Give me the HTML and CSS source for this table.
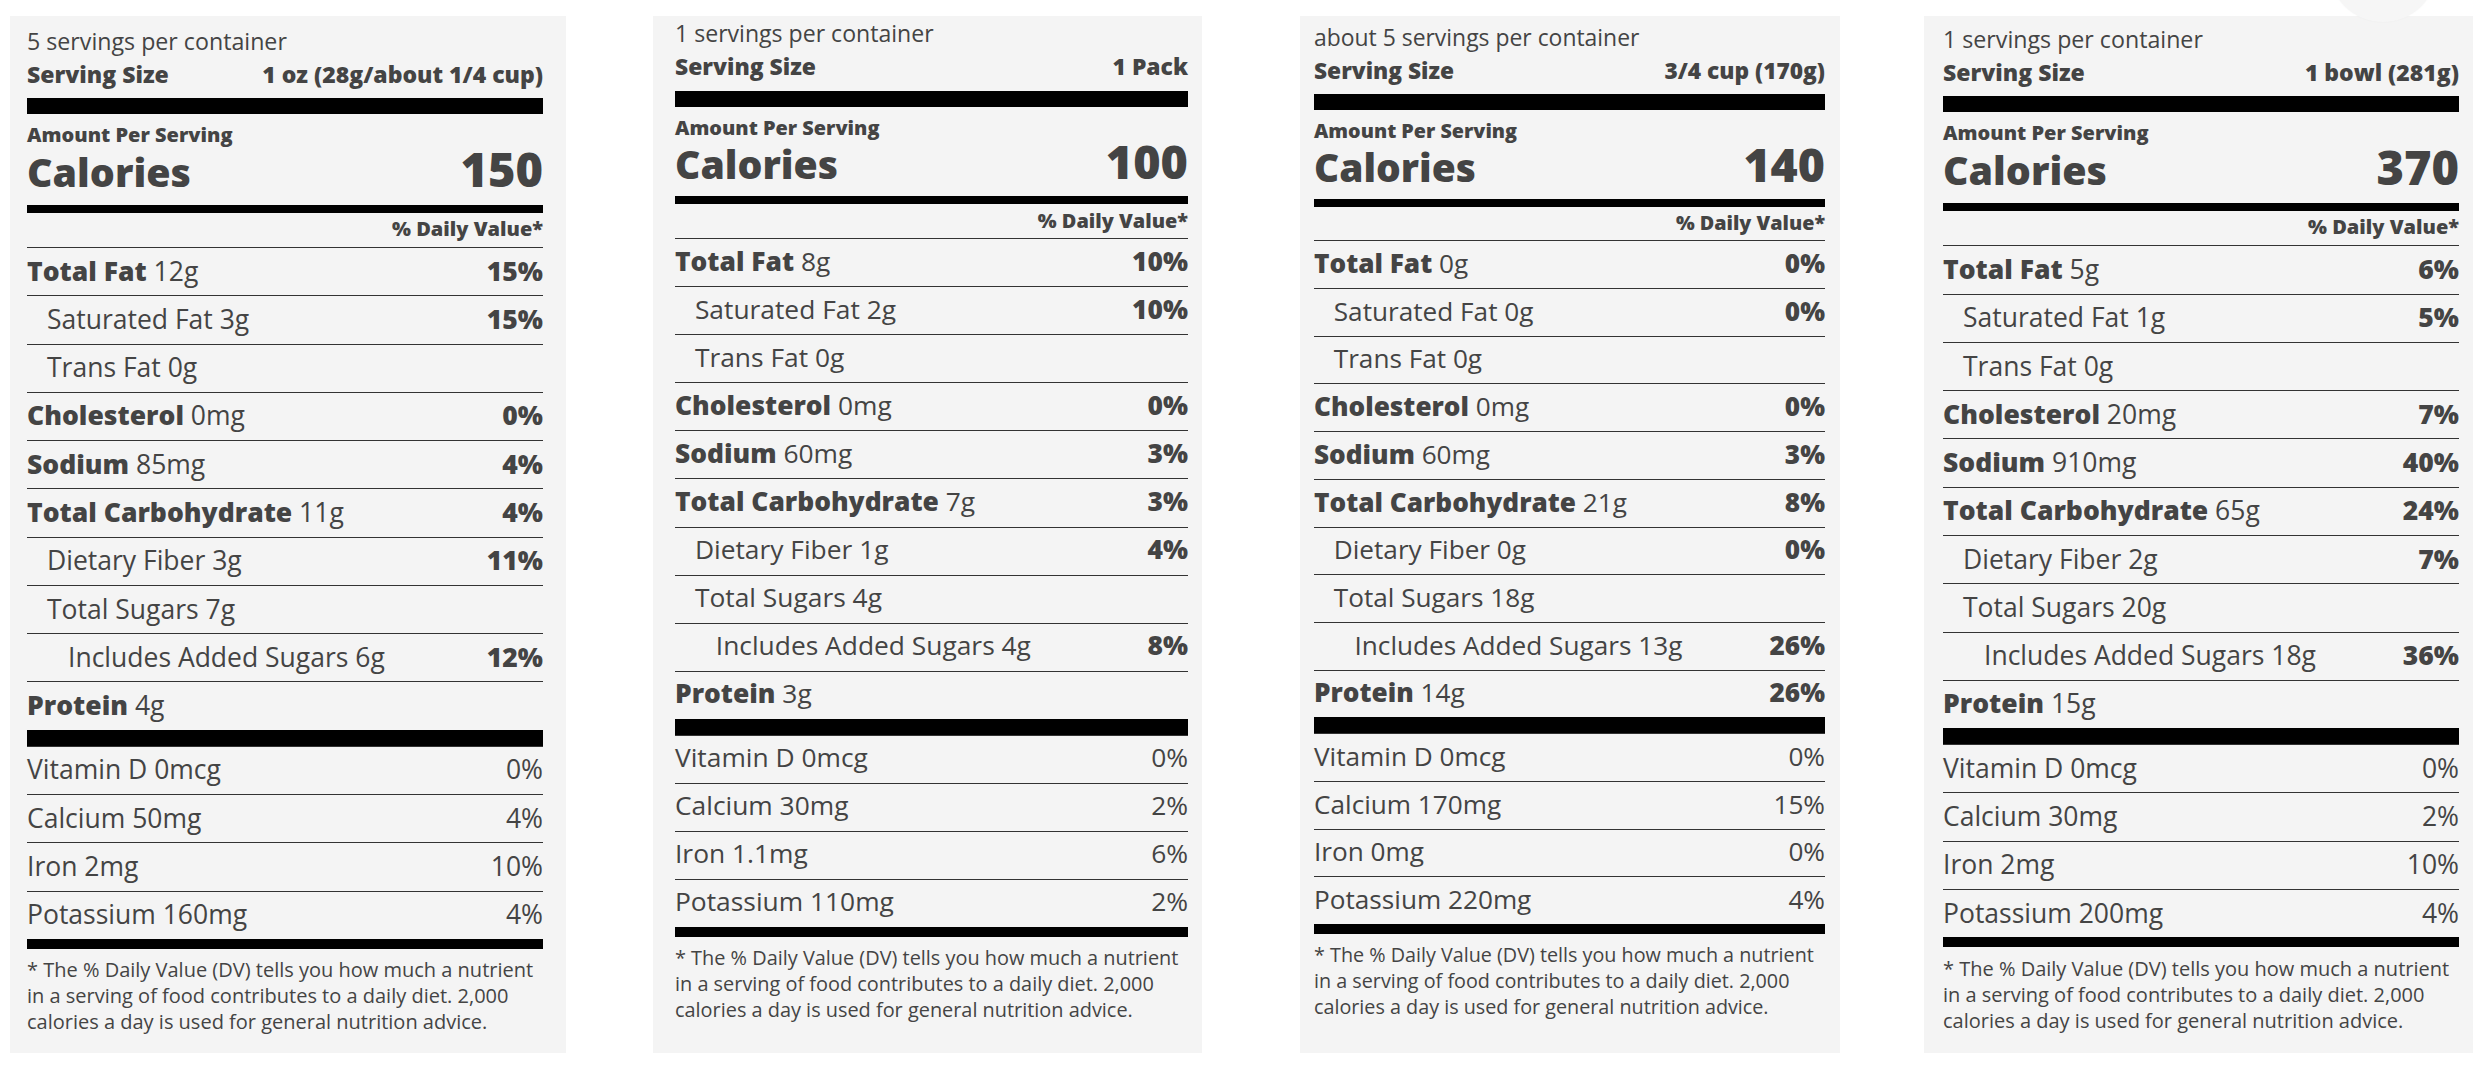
FILE: index.html
```html
<!DOCTYPE html>
<html lang="en">
<head>
<meta charset="utf-8">
<title>Nutrition Facts</title>
<link rel="stylesheet" href="styles.css">
</head>
<body>
<div class="page">
  <span class="nav-dot" aria-hidden="true"></span>
  <main class="labels">

    <section class="label label--1">
      <div class="label__body">
        <p class="servings">5 servings per container</p>
        <div class="serving-size"><span>Serving Size</span><span>1 oz (28g/about 1/4 cup)</span></div>
        <div class="bar bar--lg"></div>
        <p class="amount">Amount Per Serving</p>
        <div class="calories"><span class="calories__label">Calories</span><span class="calories__num">150</span></div>
        <div class="bar bar--md"></div>
        <p class="dv-head">% Daily Value*</p>
        <ul class="rows">
          <li class="row"><span><b>Total Fat</b> 12g</span><b>15%</b></li>
          <li class="row row--sub"><span>Saturated Fat 3g</span><b>15%</b></li>
          <li class="row row--sub"><span>Trans Fat 0g</span></li>
          <li class="row"><span><b>Cholesterol</b> 0mg</span><b>0%</b></li>
          <li class="row"><span><b>Sodium</b> 85mg</span><b>4%</b></li>
          <li class="row"><span><b>Total Carbohydrate</b> 11g</span><b>4%</b></li>
          <li class="row row--sub"><span>Dietary Fiber 3g</span><b>11%</b></li>
          <li class="row row--sub"><span>Total Sugars 7g</span></li>
          <li class="row row--subsub"><span>Includes Added Sugars 6g</span><b>12%</b></li>
          <li class="row"><span><b>Protein</b> 4g</span></li>
        </ul>
        <div class="bar bar--xl"></div>
        <ul class="rows">
          <li class="row"><span>Vitamin D 0mcg</span><span>0%</span></li>
          <li class="row"><span>Calcium 50mg</span><span>4%</span></li>
          <li class="row"><span>Iron 2mg</span><span>10%</span></li>
          <li class="row"><span>Potassium 160mg</span><span>4%</span></li>
        </ul>
        <div class="bar bar--sm"></div>
        <p class="footnote">* The % Daily Value (DV) tells you how much a nutrient in a serving of food contributes to a daily diet. 2,000 calories a day is used for general nutrition advice.</p>
      </div>
    </section>

    <section class="label label--2">
      <div class="label__body">
        <p class="servings">1 servings per container</p>
        <div class="serving-size"><span>Serving Size</span><span>1 Pack</span></div>
        <div class="bar bar--lg"></div>
        <p class="amount">Amount Per Serving</p>
        <div class="calories"><span class="calories__label">Calories</span><span class="calories__num">100</span></div>
        <div class="bar bar--md"></div>
        <p class="dv-head">% Daily Value*</p>
        <ul class="rows">
          <li class="row"><span><b>Total Fat</b> 8g</span><b>10%</b></li>
          <li class="row row--sub"><span>Saturated Fat 2g</span><b>10%</b></li>
          <li class="row row--sub"><span>Trans Fat 0g</span></li>
          <li class="row"><span><b>Cholesterol</b> 0mg</span><b>0%</b></li>
          <li class="row"><span><b>Sodium</b> 60mg</span><b>3%</b></li>
          <li class="row"><span><b>Total Carbohydrate</b> 7g</span><b>3%</b></li>
          <li class="row row--sub"><span>Dietary Fiber 1g</span><b>4%</b></li>
          <li class="row row--sub"><span>Total Sugars 4g</span></li>
          <li class="row row--subsub"><span>Includes Added Sugars 4g</span><b>8%</b></li>
          <li class="row"><span><b>Protein</b> 3g</span></li>
        </ul>
        <div class="bar bar--xl"></div>
        <ul class="rows">
          <li class="row"><span>Vitamin D 0mcg</span><span>0%</span></li>
          <li class="row"><span>Calcium 30mg</span><span>2%</span></li>
          <li class="row"><span>Iron 1.1mg</span><span>6%</span></li>
          <li class="row"><span>Potassium 110mg</span><span>2%</span></li>
        </ul>
        <div class="bar bar--sm"></div>
        <p class="footnote">* The % Daily Value (DV) tells you how much a nutrient in a serving of food contributes to a daily diet. 2,000 calories a day is used for general nutrition advice.</p>
      </div>
    </section>

    <section class="label label--3">
      <div class="label__body">
        <p class="servings">about 5 servings per container</p>
        <div class="serving-size"><span>Serving Size</span><span>3/4 cup (170g)</span></div>
        <div class="bar bar--lg"></div>
        <p class="amount">Amount Per Serving</p>
        <div class="calories"><span class="calories__label">Calories</span><span class="calories__num">140</span></div>
        <div class="bar bar--md"></div>
        <p class="dv-head">% Daily Value*</p>
        <ul class="rows">
          <li class="row"><span><b>Total Fat</b> 0g</span><b>0%</b></li>
          <li class="row row--sub"><span>Saturated Fat 0g</span><b>0%</b></li>
          <li class="row row--sub"><span>Trans Fat 0g</span></li>
          <li class="row"><span><b>Cholesterol</b> 0mg</span><b>0%</b></li>
          <li class="row"><span><b>Sodium</b> 60mg</span><b>3%</b></li>
          <li class="row"><span><b>Total Carbohydrate</b> 21g</span><b>8%</b></li>
          <li class="row row--sub"><span>Dietary Fiber 0g</span><b>0%</b></li>
          <li class="row row--sub"><span>Total Sugars 18g</span></li>
          <li class="row row--subsub"><span>Includes Added Sugars 13g</span><b>26%</b></li>
          <li class="row"><span><b>Protein</b> 14g</span><b>26%</b></li>
        </ul>
        <div class="bar bar--xl"></div>
        <ul class="rows">
          <li class="row"><span>Vitamin D 0mcg</span><span>0%</span></li>
          <li class="row"><span>Calcium 170mg</span><span>15%</span></li>
          <li class="row"><span>Iron 0mg</span><span>0%</span></li>
          <li class="row"><span>Potassium 220mg</span><span>4%</span></li>
        </ul>
        <div class="bar bar--sm"></div>
        <p class="footnote">* The % Daily Value (DV) tells you how much a nutrient in a serving of food contributes to a daily diet. 2,000 calories a day is used for general nutrition advice.</p>
      </div>
    </section>

    <section class="label label--4">
      <div class="label__body">
        <p class="servings">1 servings per container</p>
        <div class="serving-size"><span>Serving Size</span><span>1 bowl (281g)</span></div>
        <div class="bar bar--lg"></div>
        <p class="amount">Amount Per Serving</p>
        <div class="calories"><span class="calories__label">Calories</span><span class="calories__num">370</span></div>
        <div class="bar bar--md"></div>
        <p class="dv-head">% Daily Value*</p>
        <ul class="rows">
          <li class="row"><span><b>Total Fat</b> 5g</span><b>6%</b></li>
          <li class="row row--sub"><span>Saturated Fat 1g</span><b>5%</b></li>
          <li class="row row--sub"><span>Trans Fat 0g</span></li>
          <li class="row"><span><b>Cholesterol</b> 20mg</span><b>7%</b></li>
          <li class="row"><span><b>Sodium</b> 910mg</span><b>40%</b></li>
          <li class="row"><span><b>Total Carbohydrate</b> 65g</span><b>24%</b></li>
          <li class="row row--sub"><span>Dietary Fiber 2g</span><b>7%</b></li>
          <li class="row row--sub"><span>Total Sugars 20g</span></li>
          <li class="row row--subsub"><span>Includes Added Sugars 18g</span><b>36%</b></li>
          <li class="row"><span><b>Protein</b> 15g</span></li>
        </ul>
        <div class="bar bar--xl"></div>
        <ul class="rows">
          <li class="row"><span>Vitamin D 0mcg</span><span>0%</span></li>
          <li class="row"><span>Calcium 30mg</span><span>2%</span></li>
          <li class="row"><span>Iron 2mg</span><span>10%</span></li>
          <li class="row"><span>Potassium 200mg</span><span>4%</span></li>
        </ul>
        <div class="bar bar--sm"></div>
        <p class="footnote">* The % Daily Value (DV) tells you how much a nutrient in a serving of food contributes to a daily diet. 2,000 calories a day is used for general nutrition advice.</p>
      </div>
    </section>

  </main>
</div>
</body>
</html>
```

FILE: styles.css
```css
html, body {
  margin: 0;
  padding: 0;
  background: #ffffff;
}

body {
  font-family: "Open Sans", "Noto Sans", "Liberation Sans", sans-serif;
  color: #444444;
}

.page {
  position: relative;
  width: 2488px;
  height: 1066px;
  overflow: hidden;
}

.nav-dot {
  position: absolute;
  left: 2329px;
  top: -86px;
  width: 108px;
  height: 108px;
  border-radius: 50%;
  background: #f6f6f6;
  box-shadow: 0 0 2px rgba(0, 0, 0, 0.04);
}

.labels {
  display: flex;
  align-items: stretch;
  box-sizing: border-box;
  height: 1066px;
  padding: 16px 0 13px 10px;
}

.label {
  box-sizing: border-box;
  flex: none;
  background: #f4f4f4;
}

.label--1 { width: 556px; padding: 11px 23px 0 17px; }
.label--2 { width: 549px; margin-left: 87px; padding: 4.4px 14px 0 22px; }
.label--3 { width: 540px; margin-left: 98px; padding: 8px 15px 0 14px; }
.label--4 { width: 549px; margin-left: 84px; padding: 9.3px 14px 0 19px; }

.label--2 .label__body { zoom: 0.995; }
.label--3 .label__body { zoom: 0.988; }

p { margin: 0; }

b { font-weight: 800; }

.servings {
  font-size: 23.2px;
  line-height: 28px;
}

.serving-size {
  display: flex;
  justify-content: space-between;
  margin-top: 5.1px;
  font-size: 23px;
  line-height: 28px;
  font-weight: 800;
}

.bar { background: #000000; }
.bar--lg { height: 16px; margin-top: 9.9px; }
.bar--md { height: 8px; margin-top: 12.8px; }
.bar--xl { height: 16px; }
.bar--sm { height: 10px; }

.amount {
  margin-top: 8.2px;
  font-size: 20px;
  line-height: 26px;
  font-weight: 800;
}

.calories {
  display: flex;
  justify-content: space-between;
  align-items: baseline;
  margin-top: 1px;
  line-height: 40px;
  font-weight: 800;
}

.calories__label { font-size: 39.4px; }
.calories__num { font-size: 47px; }

.dv-head {
  margin-top: 4.2px;
  padding-bottom: 5.8px;
  font-size: 20px;
  line-height: 24px;
  font-weight: 800;
  text-align: right;
}

.rows {
  list-style: none;
  margin: 0;
  padding: 0;
}

.row {
  display: flex;
  justify-content: space-between;
  border-top: 1px solid #333333;
  padding: 4.7px 0 6.6px;
  font-size: 26.5px;
  line-height: 36px;
}

.row--sub { padding-left: 20px; }
.row--subsub { padding-left: 41px; }

.footnote {
  margin-top: 8.4px;
  font-size: 20px;
  line-height: 26px;
}
```
